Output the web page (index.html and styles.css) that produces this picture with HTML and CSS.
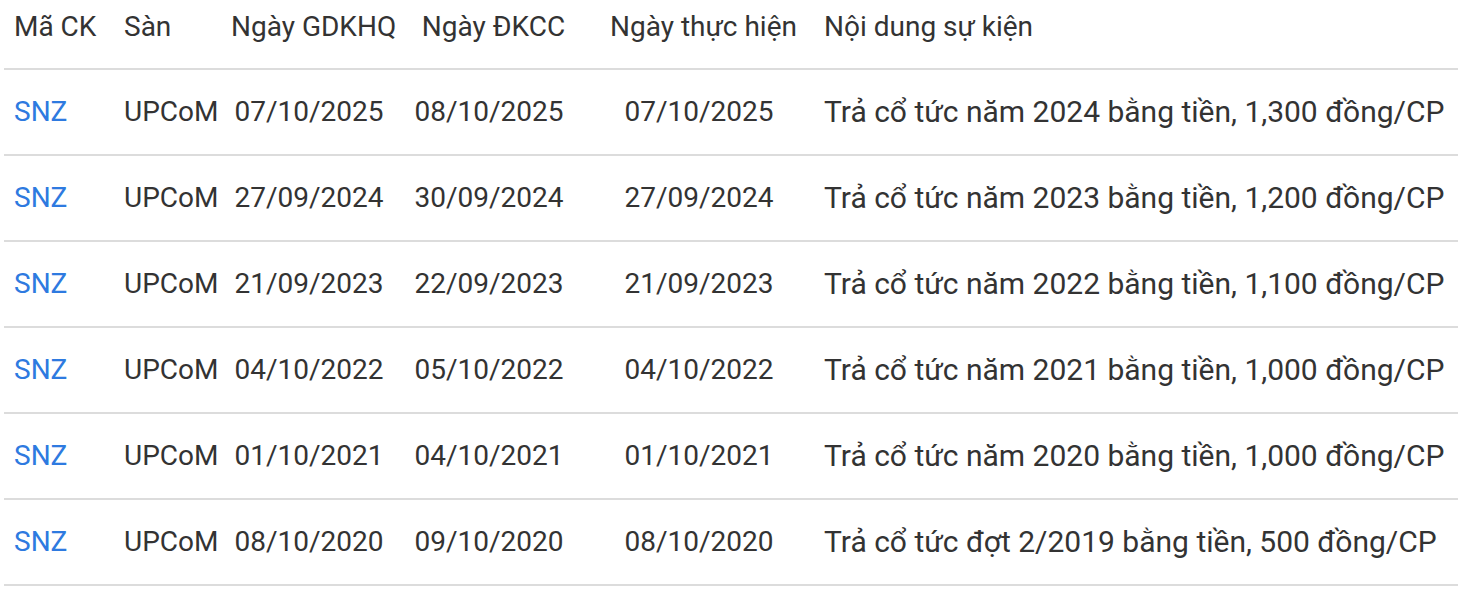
FILE: index.html
```html
<!DOCTYPE html>
<html lang="vi">
<head>
<meta charset="utf-8">
<link rel="stylesheet" href="styles.css">
</head>
<body>
<table class="events">
  <colgroup>
    <col class="c-code"><col class="c-ex"><col class="c-d1"><col class="c-d2"><col class="c-d3"><col class="c-desc">
  </colgroup>
  <thead>
    <tr>
      <th class="left">Mã CK</th>
      <th class="left">Sàn</th>
      <th class="center first-date">Ngày GDKHQ</th>
      <th class="center">Ngày ĐKCC</th>
      <th class="center">Ngày thực hiện</th>
      <th class="left desc">Nội dung sự kiện</th>
    </tr>
  </thead>
  <tbody>
    <tr><td><a class="code" href="#">SNZ</a></td><td>UPCoM</td><td class="center">07/10/2025</td><td class="center">08/10/2025</td><td class="center">07/10/2025</td><td class="desc">Trả cổ tức năm 2024 bằng tiền, 1,300 đồng/CP</td></tr>
    <tr><td><a class="code" href="#">SNZ</a></td><td>UPCoM</td><td class="center">27/09/2024</td><td class="center">30/09/2024</td><td class="center">27/09/2024</td><td class="desc">Trả cổ tức năm 2023 bằng tiền, 1,200 đồng/CP</td></tr>
    <tr><td><a class="code" href="#">SNZ</a></td><td>UPCoM</td><td class="center">21/09/2023</td><td class="center">22/09/2023</td><td class="center">21/09/2023</td><td class="desc">Trả cổ tức năm 2022 bằng tiền, 1,100 đồng/CP</td></tr>
    <tr><td><a class="code" href="#">SNZ</a></td><td>UPCoM</td><td class="center">04/10/2022</td><td class="center">05/10/2022</td><td class="center">04/10/2022</td><td class="desc">Trả cổ tức năm 2021 bằng tiền, 1,000 đồng/CP</td></tr>
    <tr><td><a class="code" href="#">SNZ</a></td><td>UPCoM</td><td class="center">01/10/2021</td><td class="center">04/10/2021</td><td class="center">01/10/2021</td><td class="desc">Trả cổ tức năm 2020 bằng tiền, 1,000 đồng/CP</td></tr>
    <tr><td><a class="code" href="#">SNZ</a></td><td>UPCoM</td><td class="center">08/10/2020</td><td class="center">09/10/2020</td><td class="center">08/10/2020</td><td class="desc">Trả cổ tức đợt 2/2019 bằng tiền, 500 đồng/CP</td></tr>
  </tbody>
</table>
</body>
</html>
```

FILE: styles.css
```css
html, body {
  margin: 0;
  padding: 0;
  background: #fff;
}
body {
  padding-left: 4px;
  font-family: Roboto, "Noto Sans", sans-serif;
  font-size: 28px;
  color: #333;
}
.events {
  border-collapse: collapse;
  table-layout: fixed;
  width: 1454px;
}
.c-code { width: 110px; }
.c-ex { width: 110px; }
.c-d1 { width: 170px; }
.c-d2 { width: 190px; }
.c-d3 { width: 230px; }
.c-desc { width: 644px; }

.events th {
  font-weight: 400;
  height: 69px;
  padding: 0 0 15px 10px;
  box-sizing: border-box;
  white-space: nowrap;
  border-bottom: 2px solid #dcdcdc;
  line-height: 1;
}
.events td {
  height: 84px;
  padding: 0 0 0 10px;
  white-space: nowrap;
  border-bottom: 2px solid #dcdcdc;
  line-height: 1;
}
.events .left { text-align: left; }
.events th.center { text-align: center; padding-left: 9px; }
.events th.first-date { padding-left: 7px; }
.events td.center { text-align: center; padding-left: 0; }
.events th.desc { padding-left: 10px; }
.events td.desc { font-size: 30px; padding-left: 10px; }
.code {
  color: #2e7ae0;
  text-decoration: none;
}
```
